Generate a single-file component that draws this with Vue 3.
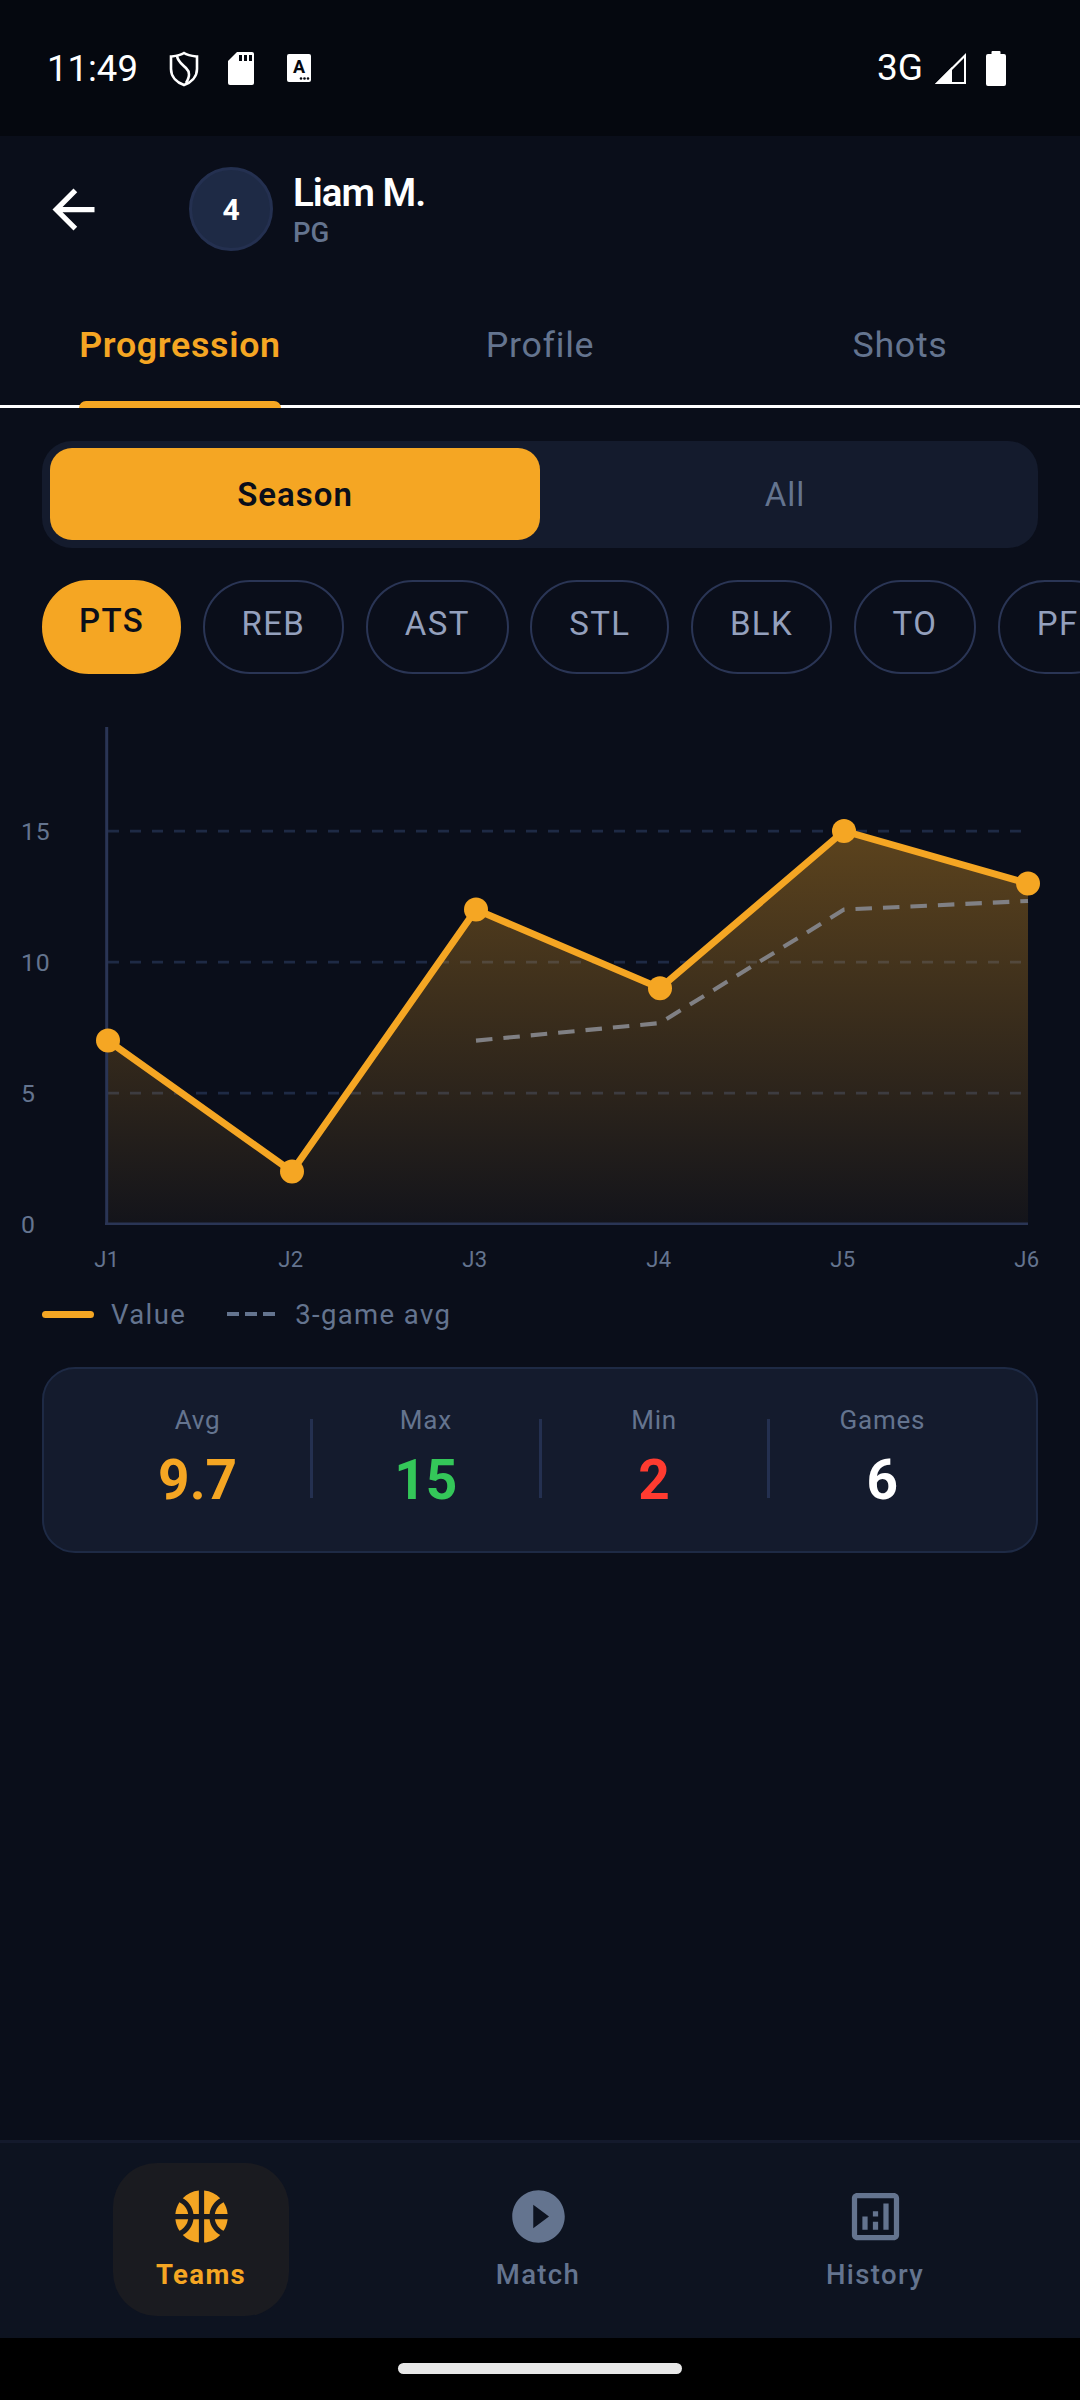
<script setup>
const pills = ['PTS', 'REB', 'AST', 'STL', 'BLK', 'TO', 'PF']
const values = [7, 2, 12, 9, 15, 13]
const avg = [null, null, 7, 7.67, 12, 12.33]
const xAt = (i) => 108 + i * 184
const yAt = (v) => 1224 - 26.2 * v - 700
const points = values.map((v, i) => ({ x: xAt(i), y: yAt(v) }))
const linePts = points.map((p) => `${p.x},${p.y}`).join(' ')
const areaPts = `108,${yAt(0)} ${linePts} 1028,${yAt(0)}`
const avgPts = avg
  .map((v, i) => (v === null ? null : `${xAt(i)},${yAt(v)}`))
  .filter(Boolean)
  .join(' ')
const grid = [5, 10, 15]
const yLabels = [0, 5, 10, 15]
const stats = [
  { label: 'Avg', value: '9.7', cls: 'amber' },
  { label: 'Max', value: '15', cls: 'green' },
  { label: 'Min', value: '2', cls: 'red' },
  { label: 'Games', value: '6', cls: 'white' }
]
</script>

<template>
  <div class="screen">
    <div class="status">
      <span class="time">11:49</span>
      <svg class="st-shield" width="30" height="36" viewBox="0 0 30 36">
        <path d="M15 2 C19 4.500 24 5 28 5.500 V18 C28 26 22 31.500 15 34 C8 31.500 2 26 2 18 V5.500 C6 5 11 4.500 15 2 Z" fill="none" stroke="#fff" stroke-width="2.600" />
        <path d="M8 5 C9 11 13 13 17 17 C21 21 21 25 17 32" fill="none" stroke="#fff" stroke-width="2.600" />
      </svg>
      <svg class="st-sd" width="26" height="33" viewBox="0 0 26 33">
        <path d="M9 0 H24 Q26 0 26 2 V31 Q26 33 24 33 H2 Q0 33 0 31 V9 Z" fill="#fff" />
        <path d="M11 3 h3 v6 h-3 z M16 3 h3 v6 h-3 z M21 3 h3 v6 h-3 z" fill="#05080f" />
      </svg>
      <svg class="st-a" width="24" height="28" viewBox="0 0 24 28">
        <rect x="0" y="0" width="24" height="28" rx="2" fill="#fff" />
        <text x="12" y="19" text-anchor="middle" class="st-a-text">A</text>
        <circle cx="14" cy="24.500" r="1.300" fill="#05080f" />
        <circle cx="17.500" cy="24.500" r="1.300" fill="#05080f" />
        <circle cx="21" cy="24.500" r="1.300" fill="#05080f" />
      </svg>
      <span class="spacer"></span>
      <span class="net">3G</span>
      <svg class="st-signal" width="33" height="33" viewBox="0 0 33 33">
        <path d="M32 1 V32 H1 Z M30 6 L18 18 V30 H30 Z" fill="#fff" fill-rule="evenodd" />
        <path d="M18 15 V32 H1 Z" fill="#fff" />
      </svg>
      <svg class="st-battery" width="20" height="35" viewBox="0 0 20 35">
        <path d="M6.500 0 H13.500 Q14.500 0 14.500 1 V3 H18 Q20 3 20 5 V33 Q20 35 18 35 H2 Q0 35 0 33 V5 Q0 3 2 3 H5.500 V1 Q5.500 0 6.500 0 Z" fill="#fff" />
      </svg>
    </div>

    <div class="header">
      <svg class="back" width="63" height="63" viewBox="0 0 24 24">
        <path d="M20 11H7.830l5.590-5.590L12 4l-8 8 8 8 1.410-1.410L7.830 13H20v-2z" fill="#fff" />
      </svg>
      <div class="avatar">4</div>
      <div class="who">
        <div class="name">Liam M.</div>
        <div class="pos">PG</div>
      </div>
    </div>

    <div class="tabs">
      <div class="tab active"><span class="tab-text">Progression<i class="indicator"></i></span></div>
      <div class="tab"><span class="tab-text">Profile</span></div>
      <div class="tab"><span class="tab-text">Shots</span></div>
    </div>

    <div class="content">
      <div class="toggle">
        <div class="seg on">Season</div>
        <div class="seg">All</div>
      </div>

      <div class="pills">
        <div v-for="(p, i) in pills" :key="p" class="pill" :class="{ sel: i === 0 }">{{ p }}</div>
      </div>

      <svg class="chart" width="1080" height="590" viewBox="0 0 1080 590">
        <defs>
          <linearGradient id="areaFill" x1="0" y1="131" x2="0" y2="524" gradientUnits="userSpaceOnUse">
            <stop offset="0" stop-color="#f5a623" stop-opacity="0.35" />
            <stop offset="1" stop-color="#f5a623" stop-opacity="0.04" />
          </linearGradient>
        </defs>
        <line v-for="g in grid" :key="g" x1="108" x2="1028" :y1="yAt(g)" :y2="yAt(g)" class="gridline" />
        <polygon :points="areaPts" fill="url(#areaFill)" />
        <line x1="106.700" x2="106.700" y1="27" y2="525" class="axis" />
        <line x1="105" x2="1028" y1="523.700" y2="523.700" class="axis thin" />
        <polyline :points="avgPts" class="avgline" />
        <polyline :points="linePts" class="valueline" />
        <circle v-for="p in points" :key="p.x" :cx="p.x" :cy="p.y" r="12" fill="#f5a623" />
        <text v-for="l in yLabels" :key="l" x="21" :y="yAt(l) + 9" class="ylab">{{ l }}</text>
        <text v-for="(v, i) in values" :key="'x' + i" :x="xAt(i) - 1" y="567" text-anchor="middle" class="xlab">J{{ i + 1 }}</text>
      </svg>

      <div class="legend">
        <span class="sw-solid"></span>
        <span class="leg-text">Value</span>
        <span class="sw-dash"><i></i><i></i><i></i></span>
        <span class="leg-text">3-game avg</span>
      </div>

      <div class="card">
        <template v-for="(s, i) in stats" :key="s.label">
          <div v-if="i > 0" class="divider"></div>
          <div class="stat">
            <div class="stat-label">{{ s.label }}</div>
            <div class="stat-value" :class="s.cls">{{ s.value }}</div>
          </div>
        </template>
      </div>
    </div>

    <div class="nav">
      <div class="nav-item current">
        <svg width="63" height="63" viewBox="0 0 24 24" fill="#f5a623">
          <path d="M17.090 11h4.860c-.16-1.610-.71-3.110-1.540-4.400C18.680 7.430 17.420 9.050 17.090 11z" />
          <path d="M6.910 11C6.580 9.050 5.320 7.430 3.590 6.600 2.760 7.890 2.210 9.390 2.050 11H6.910z" />
          <path d="M15.070 11c.32-2.590 1.880-4.790 4.060-6-1.600-1.630-3.740-2.710-6.130-2.950V11H15.070z" />
          <path d="M8.930 11H11V2.050C8.610 2.290 6.460 3.370 4.870 5 7.050 6.210 8.610 8.410 8.930 11z" />
          <path d="M15.070 13H13v8.950c2.390-.24 4.540-1.320 6.130-2.950C16.950 17.790 15.390 15.590 15.070 13z" />
          <path d="M3.590 17.400c1.720-.83 2.990-2.460 3.320-4.400H2.050C2.210 14.610 2.760 16.110 3.590 17.400z" />
          <path d="M17.090 13c.33 1.950 1.590 3.570 3.320 4.400.83-1.290 1.380-2.790 1.540-4.400H17.090z" />
          <path d="M8.930 13c-.32 2.590-1.880 4.790-4.060 6 1.600 1.630 3.740 2.710 6.130 2.950V13H8.930z" />
        </svg>
        <span class="nav-label">Teams</span>
      </div>
      <div class="nav-item">
        <svg width="63" height="63" viewBox="0 0 24 24" fill="#64748f">
          <path d="M12 2C6.480 2 2 6.480 2 12s4.480 10 10 10 10-4.480 10-10S17.520 2 12 2zm-2 14.500v-9l6 4.500-6 4.500z" />
        </svg>
        <span class="nav-label">Match</span>
      </div>
      <div class="nav-item">
        <svg width="63" height="63" viewBox="0 0 24 24" fill="#64748f">
          <path d="M19 3H5c-1.100 0-2 .9-2 2v14c0 1.100.9 2 2 2h14c1.100 0 2-.9 2-2V5c0-1.100-.9-2-2-2zm0 16H5V5h14v14z" />
          <path d="M7 12h2v5H7zM15 7h2v10h-2zM11 14h2v3h-2zM11 10h2v2h-2z" />
        </svg>
        <span class="nav-label">History</span>
      </div>
    </div>

    <div class="gesture"><span class="home"></span></div>
  </div>
</template>

<style scoped>
.screen {
  width: 1080px;
  height: 2400px;
  display: flex;
  flex-direction: column;
  background: #0a0e1a;
  font-family: Roboto, "Noto Sans", sans-serif;
  overflow: hidden;
}
.status {
  height: 136px;
  background: #05080f;
  display: flex;
  align-items: center;
  padding: 0 74px 0 47px;
  color: #fff;
  flex-shrink: 0;
  box-sizing: border-box;
}
.time { font-size: 36.500px; line-height: 44px; margin-top: 1px; width: 122px; }
.st-shield { margin-top: 1px; }
.st-sd { margin-left: 29px; }
.st-a { margin-left: 33px; }
.st-a-text { font-size: 18px; font-weight: 700; fill: #05080f; font-family: Roboto, sans-serif; }
.spacer { flex: 1; }
.net { font-size: 37px; line-height: 44px; }
.st-signal { margin-left: 11px; }
.st-battery { margin-left: 19px; }

.header {
  height: 146px;
  display: flex;
  align-items: center;
  padding-left: 42px;
  box-sizing: border-box;
  flex-shrink: 0;
}
.avatar {
  width: 84px;
  height: 84px;
  margin-left: 84px;
  box-sizing: border-box;
  border-radius: 50%;
  background: #1e2a45;
  border: 3px solid #243050;
  color: #fff;
  font-size: 30px;
  font-weight: 700;
  display: flex;
  align-items: center;
  justify-content: center;
}
.who { margin-left: 20px; padding-top: 4px; }
.name { color: #fff; font-size: 38.500px; font-weight: 600; line-height: 44px; letter-spacing: -1px; }
.pos { color: #64748f; font-size: 27.500px; font-weight: 500; line-height: 36px; }

.tabs {
  height: 126px;
  box-sizing: border-box;
  display: grid;
  grid-template-columns: repeat(3, 1fr);
  border-bottom: 3px solid #fff;
  flex-shrink: 0;
}
.tab {
  display: flex;
  justify-content: center;
  align-items: center;
  color: #64748f;
  font-size: 35.750px;
  letter-spacing: 0.700px;
}
.tab.active { color: #f5a623; font-weight: 600; }
.tab-text { position: relative; line-height: 44px; top: 1px; }
.indicator {
  position: absolute;
  left: 0;
  right: 0;
  top: 78px;
  height: 7px;
  background: #f5a623;
  border-radius: 7px 7px 0 0;
}

.content { flex: 1; min-height: 0; }

.toggle {
  margin: 33px 42px 0;
  height: 107px;
  padding: 7px 8px 8px;
  box-sizing: border-box;
  background: #141b2d;
  border-radius: 30px;
  display: grid;
  grid-template-columns: 490px 1fr;
}
.seg {
  display: flex;
  align-items: center;
  justify-content: center;
  border-radius: 22px;
  color: #64748f;
  font-size: 33px;
  letter-spacing: 1px;
}
.seg.on { background: #f5a623; color: #0a0e1a; font-weight: 600; }

.pills {
  margin-top: 32px;
  padding-left: 42px;
  display: flex;
  gap: 21.500px;
  overflow: hidden;
}
.pill {
  flex-shrink: 0;
  height: 94px;
  padding: 0 37px 8px;
  box-sizing: border-box;
  border: 2.750px solid #2a3555;
  border-radius: 47px;
  color: #94a0bd;
  font-size: 33px;
  letter-spacing: 1.375px;
  display: flex;
  align-items: center;
  justify-content: center;
}
.pill.sel {
  background: #f5a623;
  border-color: #f5a623;
  color: #0a0e1a;
  font-weight: 500;
  padding: 0 35px 14px;
}

.chart { display: block; margin-top: 26px; }
.gridline { stroke: #1e2a45; stroke-width: 2.750; stroke-dasharray: 11 11; }
.axis { stroke: #2a3555; stroke-width: 3; }
.axis.thin { stroke-width: 2.500; }
.valueline { fill: none; stroke: #f5a623; stroke-width: 6.900; stroke-linejoin: round; }
.avgline { fill: none; stroke: #808084; stroke-width: 4.100; stroke-dasharray: 16.500 11; }
.ylab, .xlab { fill: #64748f; font-family: Roboto, sans-serif; }
.ylab { font-size: 24.750px; letter-spacing: 0.800px; }
.xlab { font-size: 22px; letter-spacing: 0.500px; }

.legend {
  margin: 6px 42px 0;
  height: 36px;
  display: flex;
  align-items: center;
}
.sw-solid {
  width: 52px;
  height: 7px;
  border-radius: 4px;
  background: #f5a623;
  margin-right: 17px;
}
.sw-dash {
  display: flex;
  gap: 6px;
  margin: 0 20px 0 41px;
}
.sw-dash i {
  width: 12px;
  height: 4px;
  background: #64748f;
  display: block;
}
.leg-text { color: #64748f; font-size: 27.500px; letter-spacing: 1.375px; }

.card {
  margin: 35px 42px 0;
  height: 186px;
  box-sizing: border-box;
  padding: 35px 41px 0;
  background: #141b2d;
  border: 2.750px solid #1e2a45;
  border-radius: 33px;
  display: flex;
  align-items: flex-start;
}
.stat {
  flex: 1;
  text-align: center;
}
.stat-label { color: #64748f; font-size: 26px; line-height: 33px; letter-spacing: 0.800px; }
.stat-value { font-size: 55px; font-weight: 700; line-height: 60px; margin-top: 13px; }
.amber { color: #f5a623; }
.green { color: #34c759; }
.red { color: #ff3b30; }
.white { color: #fff; }
.divider {
  width: 3px;
  height: 79px;
  background: #243050;
  margin-top: 15px;
  flex-shrink: 0;
}

.nav {
  height: 198px;
  box-sizing: border-box;
  border-top: 3px solid #141a2c;
  background: #0d1320;
  display: flex;
  justify-content: center;
  align-items: flex-start;
  gap: 161px;
  padding: 20px 4px 0 0;
  flex-shrink: 0;
}
.nav-item {
  width: 176px;
  height: 153px;
  box-sizing: border-box;
  padding-top: 22px;
  border-radius: 44px;
  display: flex;
  flex-direction: column;
  align-items: center;
}
.nav-item.current { background: #1a1b20; }
.nav-label {
  margin-top: 9px;
  color: #64748f;
  font-size: 27.500px;
  line-height: 36px;
  font-weight: 500;
  letter-spacing: 1.375px;
}
.current .nav-label { color: #f5a623; font-weight: 700; }

.gesture {
  height: 62px;
  background: #000;
  flex-shrink: 0;
  display: flex;
  justify-content: center;
  padding-top: 25px;
  box-sizing: border-box;
}
.home {
  width: 284px;
  height: 11px;
  border-radius: 6px;
  background: #e8e8e8;
}
</style>
<style>
html, body { margin: 0; background: #0a0e1a; }
</style>
